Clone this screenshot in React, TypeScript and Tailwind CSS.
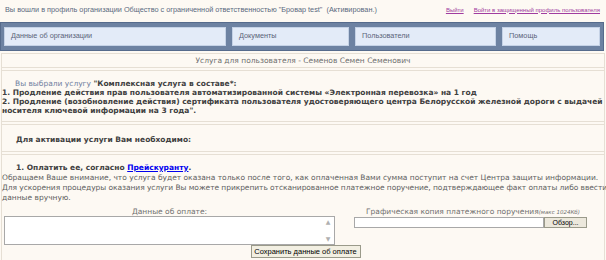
import React from "react";

export default function App() {
  const v = { fontFamily: '"DejaVu Sans", Verdana, sans-serif' };
  const a = { fontFamily: '"Liberation Sans", Arial, sans-serif' };
  return (
    <div className="w-[606px] h-[260px] overflow-hidden bg-[#fdf9f3]">
      <div className="h-[20px] flex items-center justify-between pl-[5px] pr-[6px] text-[7.3px] text-[#5a6a80] whitespace-nowrap" style={a}>
        <span>Вы вошли в профиль организации Общество с ограниченной ответственностью "Бровар test"&nbsp; (Активирован.)</span>
        <span className="flex gap-[10px] text-[6px] text-[#a03ca0]">
          <span className="underline">Выйти</span>
          <span className="underline">Войти в защищенный профиль пользователя</span>
        </span>
      </div>
      <div className="mt-[2px] mr-[2px] h-[29px] bg-[#6d82a2] border border-[#566b8c] flex gap-[6px] items-center px-[3px] text-[7.3px] text-[#5a6478]" style={a}>
        {[
          ["Данные об организации", "w-[222px]"],
          ["Документы", "w-[117px]"],
          ["Пользователи", "w-[141px]"],
          ["Помощь", "w-[98px]"],
        ].map(([t, w]) => (
          <div key={t} className={`${w} h-[19px] flex items-center pl-[6px] bg-[#e3ebf8] border border-[#c5d2e6]`}>
            {t}
          </div>
        ))}
      </div>
      <div className="mt-[2px] mx-[1px] border border-[#e6dfd4] bg-[#fdf9f3] h-[208px] text-[7.5px] text-[#505050]" style={v}>
        <div className="h-[14px] border-b border-[#e6dfd4] flex items-center justify-center text-[#6e6e6e]">
          Услуга для пользователя - Семенов Семен Семенович
        </div>
        <div className="mt-[2px] h-[52px] border-y border-[#e6dfd4] pt-[8px] leading-[9px]">
          <div className="pl-[13px]">
            <span className="text-[#7080a0]">Вы выбрали услугу </span>
            <b className="text-[#404040]">"Комплексная услуга в составе*:</b>
          </div>
          <b className="block text-[#404040]">
            1. Продление действия прав пользователя автоматизированной системы «Электронная перевозка» на 1 год
            <br />
            2. Продление (возобновление действия) сертификата пользователя удостоверяющего центра Белорусской железной дороги с выдачей носителя ключевой информации на 3 года".
          </b>
        </div>
        <div className="mt-[2px] h-[28px] border-y border-[#e6dfd4] flex items-center pl-[14px] pt-[3px]">
          <b className="text-[#404040]">Для активации услуги Вам необходимо:</b>
        </div>
        <div className="mt-[2px] border-t border-[#e6dfd4] pt-[8px] leading-[10px]">
          <div className="pl-[14px]">
            <b className="text-[#404040]">
              1. Оплатить ее, согласно <span className="text-[#0000ee] underline">Прейскуранту</span>.
            </b>
          </div>
          <div className="text-[#606060]">
            Обращаем Ваше внимание, что услуга будет оказана только после того, как оплаченная Вами сумма поступит на счет Центра защиты информации.
            <br />
            <span className="whitespace-nowrap tracking-[-0.06px]">
              Для ускорения процедуры оказания услуги Вы можете прикрепить отсканированное платежное поручение, подтверждающее факт оплаты либо ввести
            </span>
            <br />
            данные вручную.
          </div>
          <div className="flex mt-[4px]">
            <div className="w-[333px] pl-[2px] flex flex-col items-center">
              <div className="text-[#707070] leading-[9px]">Данные об оплате:</div>
              <div className="w-[331px] h-[29px] bg-white border border-[#a8a8a8] flex justify-end">
                <div className="w-[12px] flex flex-col justify-between items-center text-[6px] text-[#b0b0b0] py-[1px] leading-[8px]">
                  <span>▲</span>
                  <span>▼</span>
                </div>
              </div>
            </div>
            <div className="ml-[19px] flex flex-col items-start">
              <div className="pl-[12px] text-[#707070] leading-[9px] whitespace-nowrap">
                Графическая копия платежного поручения<i className="text-[5.5px]">(макс 1024Кб)</i>
              </div>
              <div className="flex">
                <div className="w-[190px] h-[11px] bg-white border border-[#a8a8a8]" />
                <div className="w-[43px] h-[11px] bg-[#ece8dc] border border-[#9a9a8a] flex items-center justify-center text-[7px] text-black" style={a}>
                  Обзор...
                </div>
              </div>
            </div>
          </div>
          <div className="flex justify-center pl-[5px]">
            <div className="w-[110px] h-[13px] bg-[#f2efe2] border border-[#9a9a8a] flex items-center justify-center text-[7.5px] text-black" style={a}>
              Сохранить данные об оплате
            </div>
          </div>
        </div>
      </div>
    </div>
  );
}
